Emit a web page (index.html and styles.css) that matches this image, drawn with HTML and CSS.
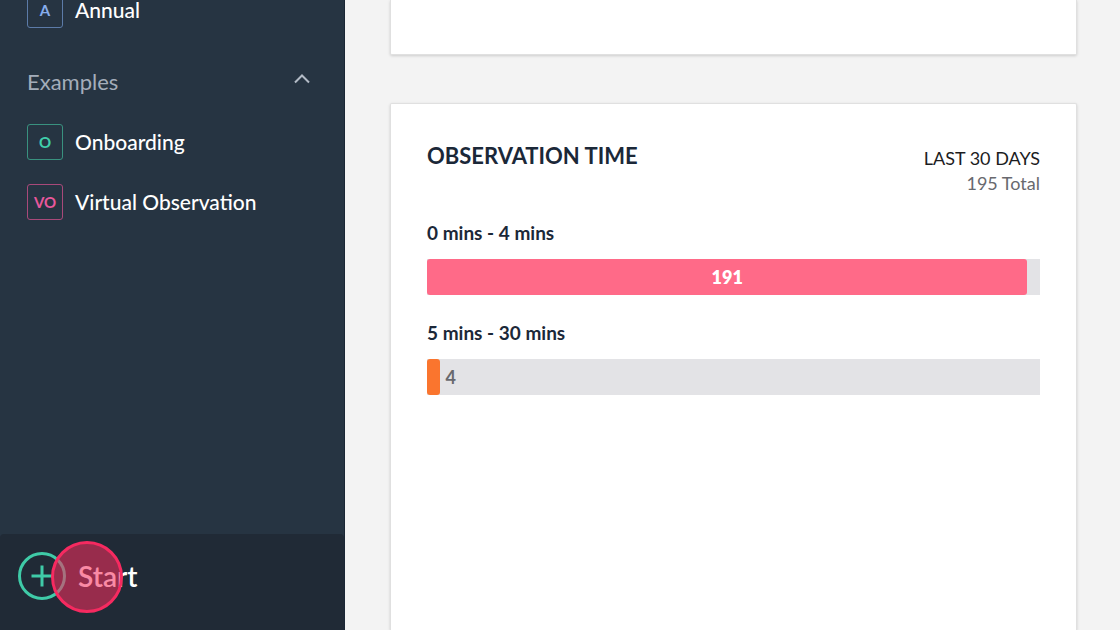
FILE: index.html
```html
<!DOCTYPE html>
<html lang="en">
<head>
<meta charset="utf-8">
<meta name="viewport" content="width=device-width, initial-scale=1">
<title>Observation Time</title>
<link rel="stylesheet" href="styles.css">
</head>
<body>
<div class="app">
  <aside class="sidebar">
    <nav class="nav">
      <a class="nav-item" href="#annual"><span class="tile tile-blue">A</span><span>Annual</span></a>
      <button class="group" type="button" aria-expanded="true">
        <span>Examples</span>
        <svg class="chevron" viewBox="0 0 16 10" aria-hidden="true"><path d="M1 8.500 8 1.500l7 7"/></svg>
      </button>
      <div class="group-items">
        <a class="nav-item" href="#onboarding"><span class="tile tile-green">O</span><span>Onboarding</span></a>
        <a class="nav-item" href="#virtual"><span class="tile tile-pink">VO</span><span>Virtual Observation</span></a>
      </div>
    </nav>
    <button class="start" type="button">
      <svg class="plus" viewBox="0 0 48 48" aria-hidden="true"><circle cx="24" cy="24" r="22.500"/><path d="M24 13.500v21M13.500 24h21"/></svg>
      <span>Start</span>
      <span class="tap" aria-hidden="true"></span>
    </button>
  </aside>
  <main class="main">
    <section class="card card-previous"></section>
    <section class="card card-time">
      <header class="card-head">
        <h2 class="title">OBSERVATION TIME</h2>
        <div class="summary"><div class="period">LAST 30 DAYS</div><div class="total">195 Total</div></div>
      </header>
      <div class="metric">
        <h3 class="label">0 mins - 4 mins</h3>
        <div class="track"><div class="fill fill-pink" style="width:97.950%">191</div></div>
      </div>
      <div class="metric">
        <h3 class="label">5 mins - 30 mins</h3>
        <div class="track"><div class="fill fill-orange" style="width:2.050%"></div><span class="count">4</span></div>
      </div>
    </section>
  </main>
</div>
</body>
</html>
```
FILE: styles.css
```css
* { box-sizing: border-box; }
body { margin: 0; font-family: Lato, sans-serif; background: #f3f3f3; color: #1b2838; }
button { border: 0; font-family: inherit; text-align: left; cursor: pointer; }
h2, h3 { margin: 0; }

.app { display: flex; height: 100vh; overflow: hidden; }

.sidebar { flex: 0 0 345px; display: flex; flex-direction: column; justify-content: space-between; background: #263442; border-right: 1px solid #1a2634; }
/* The list is scrolled so its first visible row is cut by the top edge. */
.nav { margin-top: -8px; padding: 0 27px; }
.nav-item { display: flex; align-items: center; gap: 12px; color: #fff; font-size: 21px; font-weight: 500; line-height: 24px; text-decoration: none; }
.tile { flex: 0 0 36px; height: 36px; border: 1px solid; border-radius: 3px; font-size: 15px; font-weight: 700; line-height: 34px; text-align: center; }
.tile-blue { color: #86adec; border-color: #5c7ba8; }
.tile-green { color: #40ceab; border-color: #39917f; }
.tile-pink { color: #e8589c; border-color: #a8497a; }
.group { display: flex; align-items: center; justify-content: space-between; width: 100%; margin: 36px 0 24px; padding: 0 7px 0 0; background: none; color: #a4adba; font-size: 22px; line-height: 36px; }
.chevron { width: 16px; height: 10px; margin-bottom: 6px; fill: none; stroke: #b3bbc6; stroke-width: 2; }
.group-items { display: grid; gap: 24px; }

.start { position: relative; display: flex; align-items: center; gap: 12px; height: 96px; padding: 0 18px 12px; background: #202a36; border-radius: 4px 4px 0 0; color: #fff; font-size: 28px; font-weight: 600; line-height: 32px; }
.plus { width: 48px; height: 48px; fill: none; stroke: #3fcba8; stroke-width: 3; }
.tap { position: absolute; left: 51px; top: 7px; width: 72px; height: 72px; border: 3px solid #f62a60; border-radius: 50%; background: rgba(246, 46, 94, .56); }

.main { flex: 1; display: flex; flex-direction: column; gap: 48px; padding: 0 43px 0 45px; }
.card { background: #fff; border: 1px solid #e0e0e0; border-radius: 2px; box-shadow: 0 1px 3px rgba(0, 0, 0, .16); }
.card-previous { flex: 0 0 55px; border-top: 0; border-radius: 0 0 2px 2px; }
.card-time { flex: 1; padding: 36px 36px 0; border-bottom: 0; border-radius: 2px 2px 0 0; }
.card-head { display: flex; justify-content: space-between; margin-bottom: 19px; }
.title { font-size: 22px; font-weight: 700; line-height: 32px; }
.summary { padding-top: 6px; font-size: 18px; line-height: 25px; text-align: right; }
.period { color: #1c1c1e; }
.total { color: #68696e; }
.metric { margin-bottom: 20px; }
.label { margin-bottom: 8px; font-size: 19px; font-weight: 700; line-height: 36px; }
.track { display: flex; align-items: center; height: 36px; background: #e3e3e6; }
.fill { height: 36px; border-radius: 3px; color: #fff; font-size: 18px; font-weight: 800; line-height: 36px; text-align: center; }
.fill-pink { background: #ff6a88; }
.fill-orange { background: #fa752e; }
.count { margin-left: 6px; color: #68696e; font-size: 18px; font-weight: 700; line-height: 36px; }
```
